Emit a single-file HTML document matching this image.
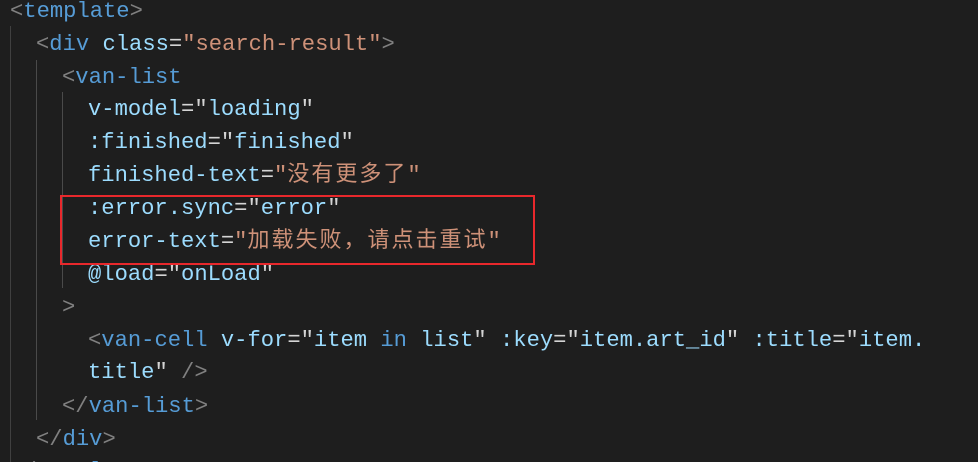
<!DOCTYPE html>
<html><head><meta charset="utf-8"><style>
html,body{margin:0;padding:0;background:#1e1e1e;width:978px;height:462px;overflow:hidden}
body{position:relative;font-family:"Liberation Mono","Noto Sans CJK SC",monospace;font-size:22.15px;color:#d4d4d4}
.l{position:absolute;white-space:pre;line-height:32px;height:32px}
.t{color:#569cd6}.p{color:#808080}.a{color:#9cdcfe}.s{color:#ce9178}.w{color:#d4d4d4}
.c{letter-spacing:2px;font-family:"Noto Sans CJK SC",sans-serif;font-size:22px}
.g{position:absolute;width:1px;background:#404040}
</style></head><body>
<div class="g" style="left:10px;top:26px;height:436px"></div>
<div class="g" style="left:36px;top:60px;height:360px;background:#4a4a4a"></div>
<div class="g" style="left:62px;top:92px;height:196px;background:#4a4a4a"></div>
<div class="l" style="left:10px;top:-4px"><span class="p">&lt;</span><span class="t">template</span><span class="p">&gt;</span></div>
<div class="l" style="left:36px;top:29px"><span class="p">&lt;</span><span class="t">div</span> <span class="a">class</span><span class="w">=</span><span class="s">"search-result"</span><span class="p">&gt;</span></div>
<div class="l" style="left:62px;top:62px"><span class="p">&lt;</span><span class="t">van-list</span></div>
<div class="l" style="left:88px;top:94px"><span class="a">v-model</span><span class="w">=</span><span class="w">"</span><span class="a">loading</span><span class="w">"</span></div>
<div class="l" style="left:88px;top:127px"><span class="a">:finished</span><span class="w">=</span><span class="w">"</span><span class="a">finished</span><span class="w">"</span></div>
<div class="l" style="left:88px;top:156px"><span class="a">finished-text</span><span class="w">=</span><span class="s">"<span class="c">没有更多了</span>"</span></div>
<div class="l" style="left:88px;top:193px"><span class="a">:error.sync</span><span class="w">=</span><span class="w">"</span><span class="a">error</span><span class="w">"</span></div>
<div class="l" style="left:88px;top:222px"><span class="a">error-text</span><span class="w">=</span><span class="s">"<span class="c">加载失败，请点击重试</span>"</span></div>
<div class="l" style="left:88px;top:259px"><span class="a">@load</span><span class="w">=</span><span class="w">"</span><span class="a">onLoad</span><span class="w">"</span></div>
<div class="l" style="left:62px;top:292px"><span class="p">&gt;</span></div>
<div class="l" style="left:88px;top:325px"><span class="p">&lt;</span><span class="t">van-cell</span> <span class="a">v-for</span><span class="w">=</span><span class="w">"</span><span class="a">item</span> <span class="t">in</span> <span class="a">list</span><span class="w">"</span> <span class="a">:key</span><span class="w">=</span><span class="w">"</span><span class="a">item.art_id</span><span class="w">"</span> <span class="a">:title</span><span class="w">=</span><span class="w">"</span><span class="a">item.</span></div>
<div class="l" style="left:88px;top:357px"><span class="a">title</span><span class="w">"</span> <span class="p">/&gt;</span></div>
<div class="l" style="left:62px;top:391px"><span class="p">&lt;/</span><span class="t">van-list</span><span class="p">&gt;</span></div>
<div class="l" style="left:36px;top:424px"><span class="p">&lt;/</span><span class="t">div</span><span class="p">&gt;</span></div>
<div class="l" style="left:10px;top:456px;height:6px;overflow:hidden"><span class="p">&lt;/</span><span class="t">template</span><span class="p">&gt;</span></div>
<div style="position:absolute;left:60px;top:195px;width:471px;height:66px;border:2px solid #e8282c"></div>
</body></html>
